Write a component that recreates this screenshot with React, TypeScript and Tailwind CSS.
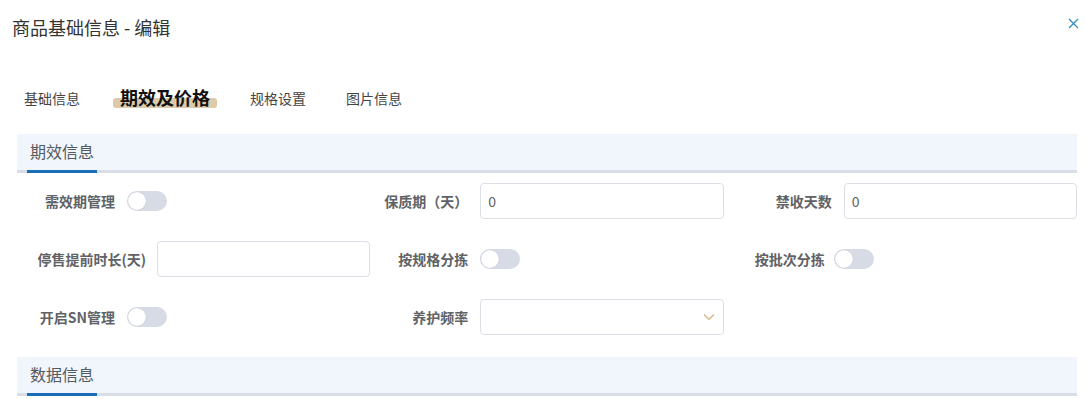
import React from "react";

const font = { fontFamily: '"Noto Sans CJK SC", "Noto Sans", sans-serif' };

function Toggle() {
  return (
    <div className="relative h-[20px] w-[40px] rounded-full bg-[#d6dbe5]">
      <div className="absolute left-[1px] top-[1px] h-[18px] w-[18px] rounded-full bg-white shadow-[0_0_1px_rgba(0,0,0,0.25)]" />
    </div>
  );
}

function Input({ value }: { value?: string }) {
  return (
    <div className="flex h-[36px] flex-1 items-center rounded-[4px] border border-[#dcdfe6] bg-white px-[7px] text-[14px] text-[#606266]">
      {value}
    </div>
  );
}

function Select() {
  return (
    <div className="flex h-[36px] flex-1 items-center justify-end rounded-[4px] border border-[#dcdfe6] bg-white pr-[8px]">
      <svg width="12" height="8" viewBox="0 0 12 8" fill="none">
        <path d="M1 1.5 L6 6.5 L11 1.5" stroke="#d4b27e" strokeWidth="1.2" />
      </svg>
    </div>
  );
}

function Item({
  label,
  w,
  pr = 12,
  children,
}: {
  label: string;
  w: number;
  pr?: number;
  children: React.ReactNode;
}) {
  return (
    <div className="flex h-[36px] items-center">
      <div
        className="shrink-0 text-right text-[14px] font-semibold text-[#606266]"
        style={{ width: w, paddingRight: pr }}
      >
        {label}
      </div>
      {children}
    </div>
  );
}

function SectionHeader({ title }: { title: string }) {
  return (
    <div className="relative ml-[17px] mr-[10px] h-[39px] border-b-[3px] border-[#d9dde6] bg-[#f1f5fc]">
      <div className="pl-[13px] pt-[5px] text-[16px] text-[#555a61]">{title}</div>
      <div className="absolute bottom-[-3px] left-[10px] h-[3px] w-[70px] bg-[#1a6db8]" />
    </div>
  );
}

export default function App() {
  return (
    <div className="h-[399px] w-[1087px] overflow-hidden bg-white" style={font}>
      <div className="flex items-start justify-between pl-[12px] pr-[8px] pt-[14px]">
        <div className="text-[18px] leading-[26px] text-[#333]">商品基础信息 - 编辑</div>
        <svg width="11" height="11" viewBox="0 0 11 11" className="mt-[4px]">
          <path d="M1 1 L10 10 M10 1 L1 10" stroke="#2f86c4" strokeWidth="1.2" />
        </svg>
      </div>

      <div className="mt-[46px] flex items-end pl-[24px] text-[14px] text-[#444]">
        <div className="leading-[20px]">基础信息</div>
        <div className="relative ml-[33px] mr-[33px] px-[7px]">
          <div className="absolute bottom-[0px] left-0 right-0 h-[10px] rounded-[3px] bg-[#dccaaa]" />
          <div className="relative text-[18px] font-bold leading-[22px] text-[#111]">期效及价格</div>
        </div>
        <div className="leading-[20px]">规格设置</div>
        <div className="ml-[40px] leading-[20px]">图片信息</div>
      </div>

      <div className="mt-[26px]">
        <SectionHeader title="期效信息" />
      </div>

      <div className="ml-[17px] mr-[10px] mt-[10px] grid grid-cols-3 gap-y-[22px]">
        <Item label="需效期管理" w={110}>
          <Toggle />
        </Item>
        <Item label="保质期（天）" w={110}>
          <Input value="0" />
        </Item>
        <Item label="禁收天数" w={120}>
          <Input value="0" />
        </Item>

        <Item label="停售提前时长(天)" w={140} pr={11}>
          <Input />
        </Item>
        <Item label="按规格分拣" w={110}>
          <Toggle />
        </Item>
        <Item label="按批次分拣" w={110} pr={9}>
          <Toggle />
        </Item>

        <Item label="开启SN管理" w={110}>
          <Toggle />
        </Item>
        <Item label="养护频率" w={110}>
          <Select />
        </Item>
        <div />
      </div>

      <div className="mt-[22px]">
        <SectionHeader title="数据信息" />
      </div>
    </div>
  );
}
